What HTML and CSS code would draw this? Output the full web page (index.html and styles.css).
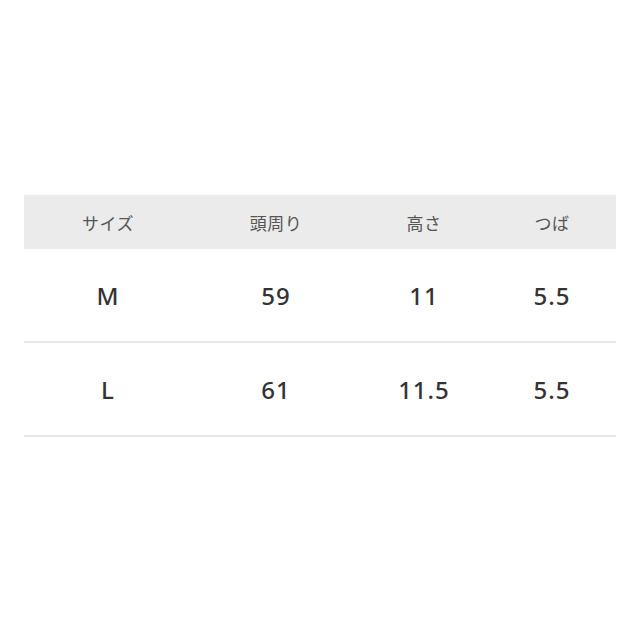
FILE: index.html
```html
<!DOCTYPE html>
<html lang="ja">
<head>
<meta charset="utf-8">
<link rel="stylesheet" href="styles.css">
</head>
<body>
<div class="page">
  <table class="size-table">
    <colgroup>
      <col class="c1"><col class="c2"><col class="c3"><col class="c4">
    </colgroup>
    <thead>
      <tr><th>サイズ</th><th>頭周り</th><th>高さ</th><th>つば</th></tr>
    </thead>
    <tbody>
      <tr><td>M</td><td>59</td><td>11</td><td>5.5</td></tr>
      <tr><td>L</td><td>61</td><td>11.5</td><td>5.5</td></tr>
    </tbody>
  </table>
</div>
</body>
</html>
```
FILE: styles.css
```css
html, body { margin: 0; padding: 0; background: #fff; }
.page { padding: 195px 24px 0; }
.size-table {
  width: 592px;
  border-collapse: collapse;
  table-layout: fixed;
}
.c1, .c2 { width: 168px; }
.c3, .c4 { width: 128px; }
.size-table th {
  height: 54px;
  padding: 0;
  background: #ebebeb;
  color: #555;
  font-family: "Noto Sans CJK JP", sans-serif;
  font-weight: 400;
  font-size: 17px;
  letter-spacing: 0.5px;
  text-align: center;
  vertical-align: middle;
}
.size-table td {
  height: 92px;
  padding: 0;
  border-bottom: 2px solid #e8e8e8;
  color: #333;
  font-family: "Noto Sans", sans-serif;
  font-weight: 500;
  font-size: 24px;
  letter-spacing: 1px;
  text-align: center;
  vertical-align: middle;
}
```
